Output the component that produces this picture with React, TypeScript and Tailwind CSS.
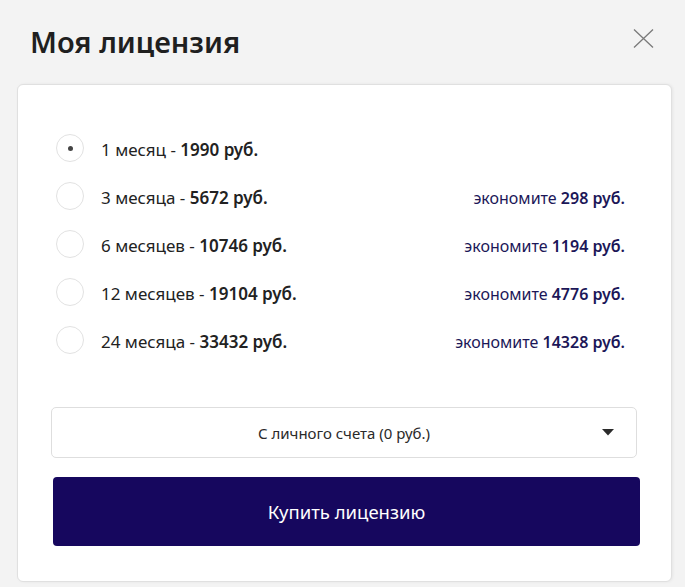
import React, { useState } from 'react';

interface Plan {
  id: number;
  label: string;
  price: string;
  saving?: string;
}

const plans: Plan[] = [
  { id: 1, label: '1 месяц', price: '1990' },
  { id: 3, label: '3 месяца', price: '5672', saving: '298' },
  { id: 6, label: '6 месяцев', price: '10746', saving: '1194' },
  { id: 12, label: '12 месяцев', price: '19104', saving: '4776' },
  { id: 24, label: '24 месяца', price: '33432', saving: '14328' },
];

const App: React.FC = () => {
  const [selected, setSelected] = useState(1);

  return (
    <div
      className="min-h-[587px] w-[685px] bg-[#f3f3f3]"
      style={{ fontFamily: '"Noto Sans", "Open Sans", sans-serif' }}
    >
      {/* Header */}
      <div className="flex h-[84px] items-start justify-between pl-[30px] pr-[31px] pt-[22px]">
        <h1 className="text-[29px] font-semibold leading-[40px] text-[#1f1f1f]">Моя лицензия</h1>
        <button className="mt-[7px] text-[#7a7a7a]">
          <svg width="21" height="19" viewBox="0 0 21 19" fill="none" stroke="currentColor" strokeWidth="1.3">
            <path d="M1 0.5 L20 18.5 M20 0.5 L1 18.5" />
          </svg>
        </button>
      </div>

      {/* Card */}
      <div className="ml-[17px] w-[655px] rounded-md border border-[#e0e0e0] bg-white pb-[35px] pt-[39px] shadow-[1px_0_3px_rgba(0,0,0,0.06)]">
        <div className="ml-[38px] w-[569px]">
          {plans.map(plan => (
            <label
              key={plan.id}
              onClick={() => setSelected(plan.id)}
              className="flex h-[48px] cursor-pointer items-center justify-between"
            >
              <div className="flex items-center">
                <span className="flex h-[28px] w-[28px] items-center justify-center rounded-full border border-[#e2e2e2] bg-white">
                  {selected === plan.id && <span className="h-[5px] w-[5px] rounded-full bg-[#444]" />}
                </span>
                <span className="ml-[17px] pt-[3px] text-[17px] text-[#222]">
                  {plan.label} - <b className="font-semibold">{plan.price} руб.</b>
                </span>
              </div>
              {plan.saving && (
                <span className="pt-[3px] text-[16px] text-[#1c1758]">
                  экономите <b className="font-semibold">{plan.saving} руб.</b>
                </span>
              )}
            </label>
          ))}
        </div>

        {/* Payment source */}
        <div className="relative ml-[33px] mt-[43px] flex h-[51px] w-[586px] items-center justify-center rounded-[5px] border border-[#dedede] bg-white">
          <span className="pt-[1px] text-[15px] text-[#2a2a2a]">С личного счета (0 руб.)</span>
          <svg className="absolute right-[22px] top-[21px]" width="12" height="7" viewBox="0 0 12 7">
            <path d="M0 0 H12 L6 6.5 Z" fill="#2b2b2b" />
          </svg>
        </div>

        <button className="ml-[35px] mt-[19px] flex h-[69px] w-[587px] items-center justify-center rounded-[4px] bg-[#16075e] text-[18.5px] text-white">
          Купить лицензию
        </button>
      </div>
    </div>
  );
};

export default App;
